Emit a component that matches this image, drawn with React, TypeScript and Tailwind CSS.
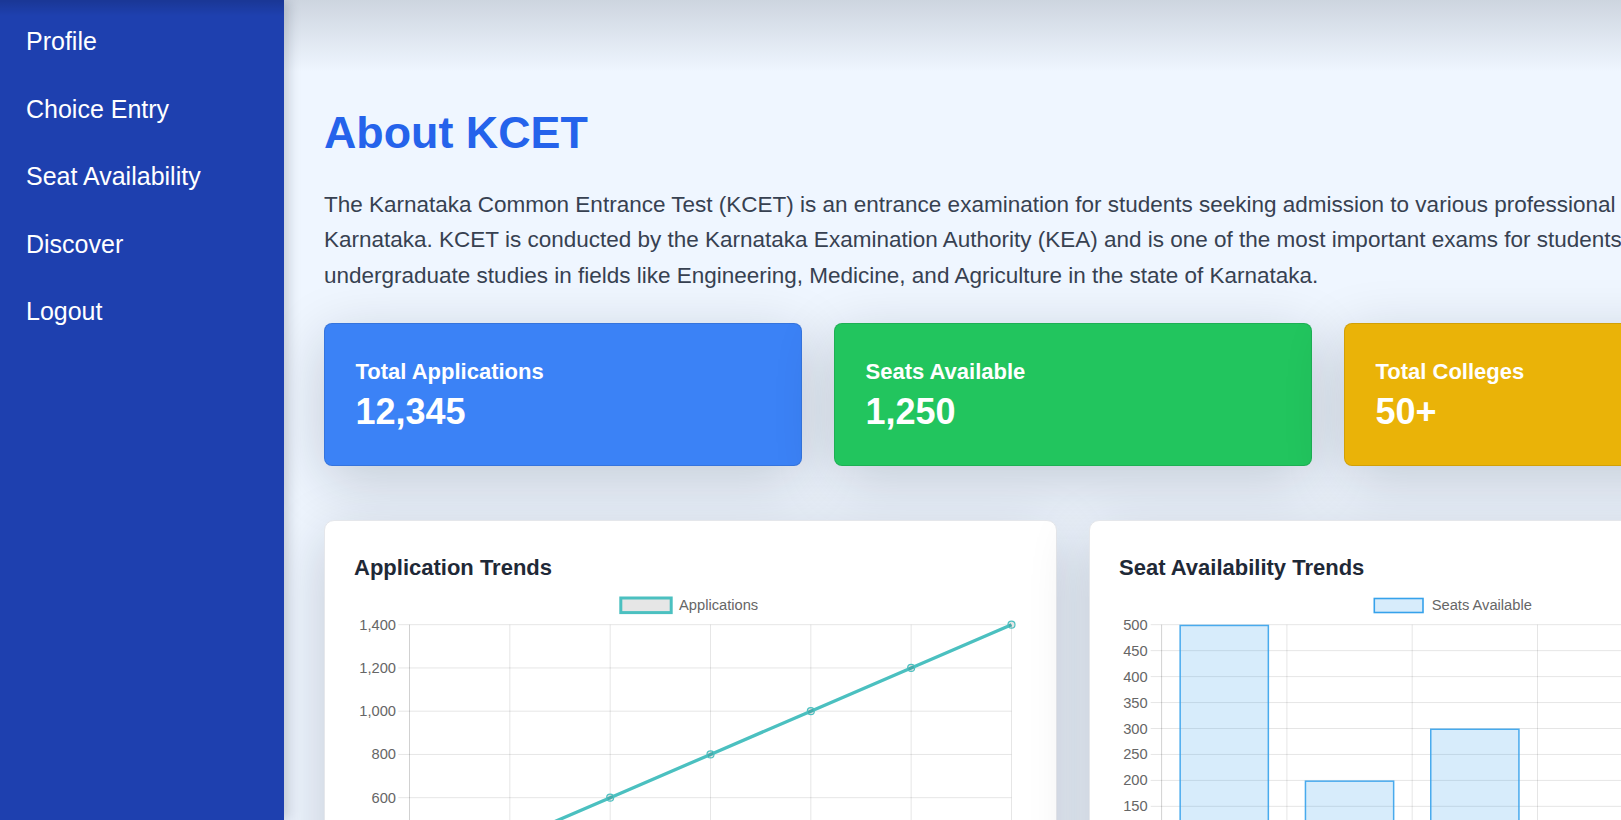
import React from "react";

const FONT = "Liberation Sans, Arial, sans-serif";

function LineChart() {
  const yTicks = [1400, 1200, 1000, 800, 600, 400, 200];
  const yOf = (v: number) => 40.7 + (1400 - v) * (43.25 / 200);
  const xs = Array.from({ length: 7 }, (_, i) => 55.5 + i * 100.33);
  const data = [200, 400, 600, 800, 1000, 1200, 1400];
  const labels = ["2018", "2019", "2020", "2021", "2022", "2023", "2024"];
  const bottom = yOf(200);
  const right = xs[6];
  return (
    <svg width={673} height={340} className="block" fontFamily={FONT}>
      <rect x={266.8} y={14} width={50.4} height={14.6} fill="#e6e6e6" stroke="#4bc0c0" strokeWidth={3} />
      <text x={325} y={26} fontSize={14.7} fill="#666">Applications</text>
      {yTicks.map((v) => (
        <g key={v}>
          <line x1={44.3} x2={right} y1={yOf(v)} y2={yOf(v)} stroke="rgba(0,0,0,0.1)" strokeWidth={1} />
          <text x={42} y={yOf(v) + 5} fontSize={14.7} fill="#666" textAnchor="end">
            {v.toLocaleString("en-US")}
          </text>
        </g>
      ))}
      {xs.map((x, i) => (
        <g key={i}>
          <line x1={x} x2={x} y1={40.7} y2={bottom + 10} stroke={i === 0 ? "rgba(0,0,0,0.18)" : "rgba(0,0,0,0.1)"} strokeWidth={1} />
          <text x={x} y={bottom + 27} fontSize={14.7} fill="#666" textAnchor="middle">{labels[i]}</text>
        </g>
      ))}
      <polyline
        points={data.map((v, i) => `${xs[i]},${yOf(v)}`).join(" ")}
        fill="none"
        stroke="#4bc0c0"
        strokeWidth={3.3}
        strokeLinejoin="round"
      />
      {data.map((v, i) => (
        <circle key={i} cx={xs[i]} cy={yOf(v)} r={3.5} fill="rgba(0,0,0,0.1)" stroke="#4bc0c0" strokeWidth={1.2} />
      ))}
    </svg>
  );
}

function BarChart() {
  const yTicks = [500, 450, 400, 350, 300, 250, 200, 150, 100, 50, 0];
  const yOf = (v: number) => 40.7 + (500 - v) * (25.95 / 50);
  const left = 42.6;
  const cw = 125.3;
  const data = [500, 200, 300, 100, 400];
  const labels = ["CSE", "ECE", "ME", "CE", "EEE"];
  const bottom = yOf(0);
  const right = left + cw * 5;
  return (
    <svg width={673} height={340} className="block" fontFamily={FONT}>
      <rect x={255.3} y={14.5} width={48.7} height={14} fill="rgba(54,162,235,0.2)" stroke="#36a2eb" strokeWidth={1.6} />
      <text x={312.7} y={26} fontSize={14.7} fill="#666">Seats Available</text>
      {yTicks.map((v) => (
        <g key={v}>
          <line x1={31.7} x2={right} y1={yOf(v)} y2={yOf(v)} stroke="rgba(0,0,0,0.1)" strokeWidth={1} />
          <text x={28.7} y={yOf(v) + 5} fontSize={14.7} fill="#666" textAnchor="end">{v}</text>
        </g>
      ))}
      {Array.from({ length: 6 }, (_, i) => left + i * cw).map((x, i) => (
        <line key={i} x1={x} x2={x} y1={40.7} y2={bottom + 10} stroke={i === 0 ? "rgba(0,0,0,0.18)" : "rgba(0,0,0,0.1)"} strokeWidth={1} />
      ))}
      {data.map((v, i) => {
        const cx = left + cw * (i + 0.5);
        const bw = 89.7;
        return (
          <g key={i}>
            <rect
              x={cx - bw / 2 + 0.75}
              y={yOf(v) + 0.75}
              width={bw - 1.5}
              height={bottom - yOf(v) - 0.75}
              fill="rgba(54,162,235,0.2)"
              stroke="rgba(54,162,235,0.9)"
              strokeWidth={1.5}
            />
            <text x={cx} y={bottom + 27} fontSize={14.7} fill="#666" textAnchor="middle">{labels[i]}</text>
          </g>
        );
      })}
    </svg>
  );
}

const navItems = ["Profile", "Choice Entry", "Seat Availability", "Discover", "Logout"];

const stats = [
  { title: "Total Applications", value: "12,345", bg: "bg-[#3b82f6]" },
  { title: "Seats Available", value: "1,250", bg: "bg-[#22c55e]" },
  { title: "Total Colleges", value: "50+", bg: "bg-[#eab308]" },
];

export default function App() {
  return (
    <div className="flex h-screen w-full overflow-hidden bg-[#eff6ff] font-['Liberation_Sans',Arial,sans-serif]">
      <aside className="relative z-10 w-[284px] shrink-0 bg-[#1e40af] shadow-[4px_0_12px_rgba(15,23,42,0.2)]">
        <div className="pointer-events-none absolute inset-x-0 top-0 h-[16px] bg-linear-to-b from-black/15 to-transparent" />
        <nav className="flex flex-col pl-[26px] pt-[8px]">
          {navItems.map((t) => (
            <a key={t} href="#" className="flex h-[67.5px] items-center text-[25px] text-white">
              {t}
            </a>
          ))}
        </nav>
      </aside>
      <main className="relative flex-1 overflow-hidden">
        <div className="pointer-events-none absolute inset-x-0 top-0 z-10 h-[72px] bg-linear-to-b from-[rgba(30,41,59,0.16)] to-transparent" />
        <div className="ml-10 w-[1498px] pt-[106px]">
          <h1 className="text-[44.8px] font-bold leading-[1.2] text-[#2563eb]">About KCET</h1>
          <p className="mt-[27px] text-[22.5px] leading-[35.5px] text-[#374151]">
            The Karnataka Common Entrance Test (KCET) is an entrance examination for students seeking admission to
            various professional courses in Karnataka. KCET is conducted by the Karnataka Examination Authority (KEA)
            and is one of the most important exams for students aspiring to pursue undergraduate studies in fields like
            Engineering, Medicine, and Agriculture in the state of Karnataka.
          </p>
          <div className="mt-[30px] grid grid-cols-3 gap-8">
            {stats.map((s) => (
              <div
                key={s.title}
                className={`rounded-lg border border-black/10 ${s.bg} pb-[33.5px] pl-[30.5px] pr-[31px] pt-[30.5px] text-white shadow-[0_15px_60px_rgba(15,23,42,0.2)]`}
              >
                <div className="text-[22px] font-bold leading-[33px]">{s.title}</div>
                <div className="mt-[4px] text-[36px] font-bold leading-[40px]">{s.value}</div>
              </div>
            ))}
          </div>
          <div className="mt-[54px] grid grid-cols-2 gap-8">
            <div className="rounded-[10px] border border-[#e5e7eb] bg-white px-[29px] pb-[29px] pt-[30px] shadow-[0_15px_60px_rgba(15,23,42,0.2)]">
              <h2 className="text-[22px] font-bold leading-[33px] text-[#1f2937]">Application Trends</h2>
              <LineChart />
            </div>
            <div className="rounded-[10px] border border-[#e5e7eb] bg-white px-[29px] pb-[29px] pt-[30px] shadow-[0_15px_60px_rgba(15,23,42,0.2)]">
              <h2 className="text-[22px] font-bold leading-[33px] text-[#1f2937]">Seat Availability Trends</h2>
              <BarChart />
            </div>
          </div>
        </div>
      </main>
    </div>
  );
}
